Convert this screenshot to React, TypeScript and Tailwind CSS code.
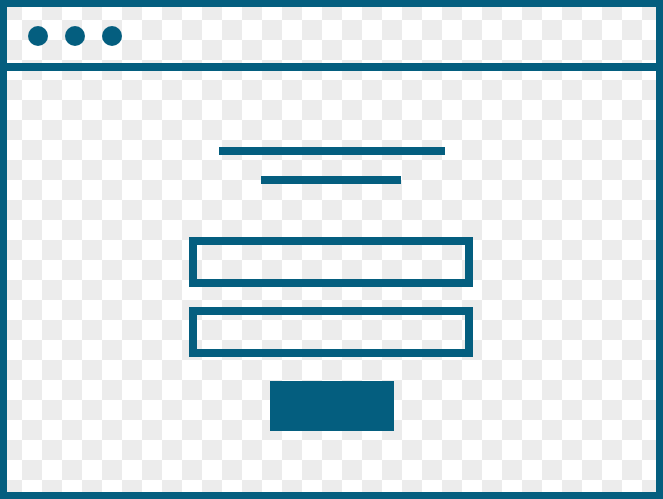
// Wireframe of a login page inside a browser window, on a transparency checkerboard.

const TEAL = "border-[#045e7f]";

export default function App() {
  return (
    <div className="w-[663px] h-[499px] [background-image:repeating-conic-gradient(#ffffff_0_25%,#ececec_0_50%)] [background-size:40px_40px] [background-position:2px_0]">
      <div className={`w-full h-full flex flex-col border-[7px] ${TEAL}`}>
        {/* ── Window chrome ─────────────────────────────── */}
        <div className={`h-[64px] flex items-center gap-[17px] pl-[21px] pt-px border-b-8 ${TEAL}`}>
          <span className="w-5 h-5 rounded-full bg-[#045e7f]" />
          <span className="w-5 h-5 rounded-full bg-[#045e7f]" />
          <span className="w-5 h-5 rounded-full bg-[#045e7f]" />
        </div>

        {/* ── Login form ────────────────────────────────── */}
        <div className="flex-1 flex flex-col items-center pt-[76px]">
          <div className="w-[226px] h-2 bg-[#045e7f] ml-px" />
          <div className="w-[140px] h-2 bg-[#045e7f] mt-[21px] -ml-[2px]" />
          <div className={`w-[284px] h-[50px] border-8 ${TEAL} mt-[53px] -ml-[2px]`} />
          <div className={`w-[284px] h-[50px] border-8 ${TEAL} mt-5 -ml-[2px]`} />
          <div className="w-[124px] h-[50px] bg-[#045e7f] mt-6 ml-px" />
        </div>
      </div>
    </div>
  );
}
